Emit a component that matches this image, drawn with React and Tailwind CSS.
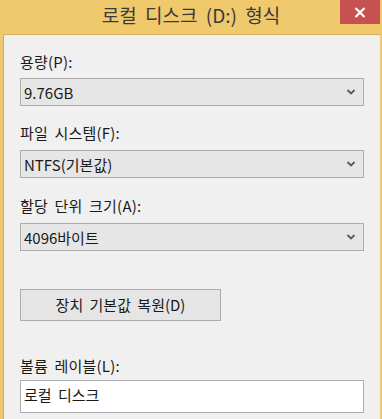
import { useState } from "react";

const FONT = { fontFamily: '"Noto Sans CJK KR", "Noto Sans", sans-serif' };

function Chevron() {
  return (
    <svg width="10" height="6" viewBox="0 0 10 6" className="text-[#5a5a5a]">
      <path d="M1.5 1 L5 4.5 L8.5 1" fill="none" stroke="currentColor" strokeWidth="1.8" />
    </svg>
  );
}

function Combo({ value }) {
  return (
    <div className="flex h-[28px] items-center justify-between border border-[#acacac] bg-[#e6e6e6] pl-[3px] pr-[7px] text-[15px] text-[#1a1a1a]">
      <span className="leading-none">{value}</span>
      <Chevron />
    </div>
  );
}

function Label({ children, className = "" }) {
  return (
    <div className={`h-[20px] text-[15px] leading-[20px] tracking-[0.2px] [word-spacing:3px] text-[#1a1a1a] ${className}`}>
      {children}
    </div>
  );
}

export default function App() {
  const [label, setLabel] = useState("로컬 디스크");

  return (
    <div className="flex h-[419px] w-[382px] flex-col overflow-hidden bg-[#efc96c]" style={FONT}>

      {/* title bar */}
      <div className="relative h-[34px] shrink-0">
        <div className="pt-[3px] text-center text-[19px] leading-[24px] [word-spacing:4px] text-[#3a3a3a]">
          로컬 디스크 (D:) 형식
        </div>
        <div className="absolute right-[2px] top-0 flex h-[24px] w-[40px] items-center justify-center bg-[#c75050]">
          <svg width="12" height="11" viewBox="0 0 12 11">
            <path d="M1.5 1 L10.5 10 M10.5 1 L1.5 10" stroke="white" strokeWidth="2.2" />
          </svg>
        </div>
      </div>

      {/* body */}
      <div className="ml-[3px] mr-[2px] flex-1 border-l border-t border-[#d4ad5c] bg-[#f0f0f0] px-[16px] pt-[17px]">
        <Label>용량(P):</Label>
        <div className="mt-[6px]">
          <Combo value="9.76GB" />
        </div>

        <Label className="mt-[17px]">파일 시스템(F):</Label>
        <div className="mt-[7px]">
          <Combo value="NTFS(기본값)" />
        </div>

        <Label className="mt-[18px]">할당 단위 크기(A):</Label>
        <div className="mt-[7px]">
          <Combo value="4096바이트" />
        </div>

        <button className="mt-[38px] flex h-[32px] w-[201px] items-center justify-center border border-[#acacac] bg-[#e5e5e5] text-[15px] [word-spacing:3px] text-[#1a1a1a]">
          장치 기본값 복원(D)
        </button>

        <Label className="mt-[35px]">볼륨 레이블(L):</Label>
        <input
          value={label}
          onChange={(e) => setLabel(e.target.value)}
          className="mt-[4px] block h-[33px] w-full border border-[#abadb3] bg-white pb-[4px] pl-[3px] text-[15px] [word-spacing:3px] text-[#1a1a1a] outline-none"
        />
      </div>
    </div>
  );
}
